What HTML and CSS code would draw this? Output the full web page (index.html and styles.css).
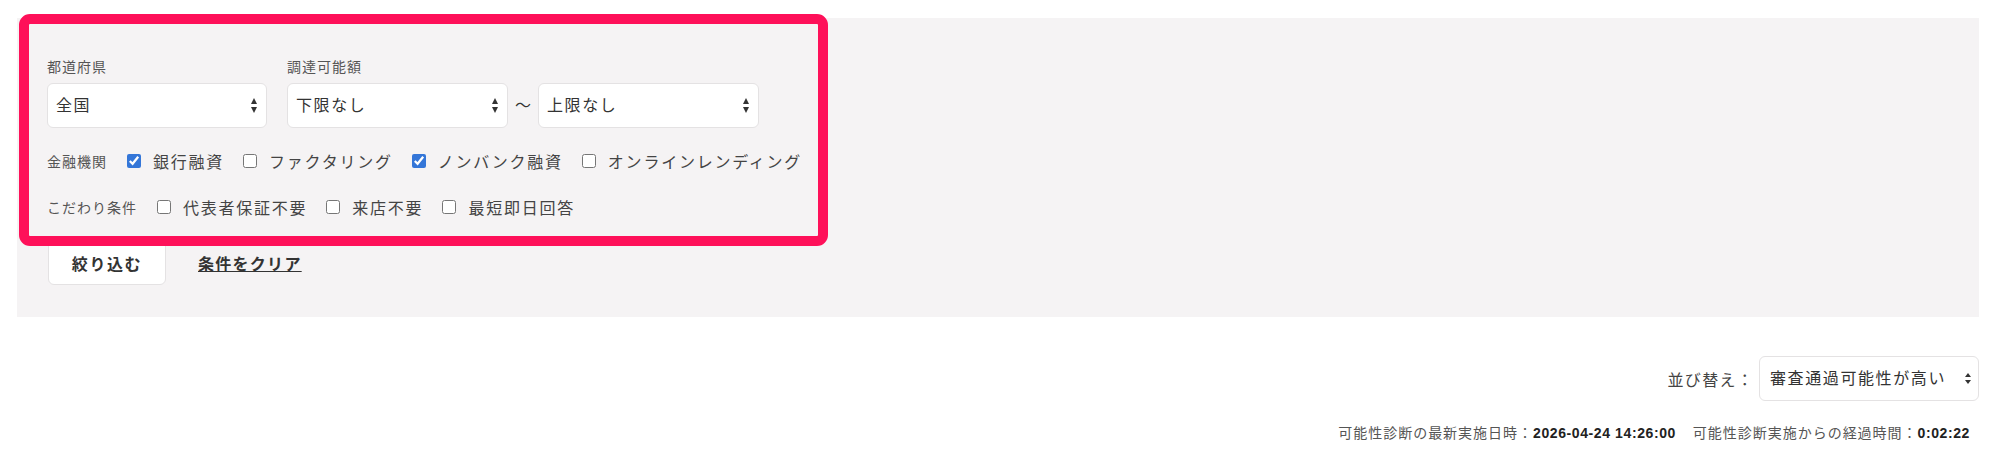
FILE: index.html
```html
<!DOCTYPE html>
<html lang="ja">

<head>
    <meta name="viewport" content="width=device-width, initial-scale=1">
    <meta charset="utf-8">
    <link rel="stylesheet" href="styles.css">
</head>

<body>

    <div class="page">
        <form class="search" action="#" method="get">
            <div class="search-row">
                <div class="field">
                    <label class="field-label" for="pref">都道府県</label>
                    <span class="select"><select id="pref" name="pref">
                        <option>全国</option>
                    </select></span>
                </div>
                <div class="field">
                    <label class="field-label" for="amount_min">調達可能額</label>
                    <div class="range">
                        <span class="select"><select id="amount_min" name="amount_min">
                            <option>下限なし</option>
                        </select></span>
                        <span class="range-sep">〜</span>
                        <span class="select"><select id="amount_max" name="amount_max">
                            <option>上限なし</option>
                        </select></span>
                    </div>
                </div>
            </div>

            <div class="check-row">
                <span class="check-title">金融機関</span>
                <label class="check"><input type="checkbox" name="type" value="bank" checked>銀行融資</label>
                <label class="check"><input type="checkbox" name="type" value="factoring">ファクタリング</label>
                <label class="check"><input type="checkbox" name="type" value="nonbank" checked>ノンバンク融資</label>
                <label class="check"><input type="checkbox" name="type" value="online">オンラインレンディング</label>
            </div>

            <div class="check-row">
                <span class="check-title">こだわり条件</span>
                <label class="check"><input type="checkbox" name="opt" value="no_guarantor">代表者保証不要</label>
                <label class="check"><input type="checkbox" name="opt" value="no_visit">来店不要</label>
                <label class="check"><input type="checkbox" name="opt" value="same_day">最短即日回答</label>
            </div>

            <div class="actions">
                <button type="submit" class="btn">絞り込む</button>
                <a href="#" class="clear">条件をクリア</a>
            </div>
        </form>

        <!-- marker frame around the filter fields -->
        <div class="highlight"></div>

        <div class="sort">
            <label for="sort">並び替え：</label>
            <span class="select select-sm"><select id="sort" name="sort">
                <option>審査通過可能性が高い</option>
            </select></span>
        </div>

        <p class="updated">
            <span>可能性診断の最新実施日時：<b>2026-04-24 14:26:00</b></span>
            <span class="elapsed">可能性診断実施からの経過時間：<b>0:02:22</b></span>
        </p>
    </div>

</body>

</html>
```

FILE: styles.css
```css
* {
    box-sizing: border-box;
}

body {
    margin: 0;
    font-family: "Liberation Sans", "Noto Sans CJK JP", sans-serif;
    color: #333;
    background: #fff;
}

.page {
    position: relative;
    padding: 18px 20px 0 17px;
}

/* search panel */

.search {
    background: #f5f3f4;
    padding: 39px 30px 32px 30px;
}

.search-row {
    display: flex;
    gap: 20px;
}

.field-label {
    display: block;
    font-size: 14px;
    line-height: 20px;
    letter-spacing: 1px;
    color: #555;
    margin-bottom: 6px;
}

.select {
    position: relative;
    display: inline-block;
}

.select select {
    -webkit-appearance: none;
    appearance: none;
    width: 220px;
    height: 45px;
    margin: 0;
    padding: 0 24px 0 8px;
    font: inherit;
    font-size: 16px;
    letter-spacing: .1em;
    color: #333;
    background: #fff;
    border: 1px solid #e4e2e3;
    border-radius: 6px;
}

/* up / down arrows */
.select::before,
.select::after {
    content: "";
    position: absolute;
    right: 10px;
    border-left: 3px solid transparent;
    border-right: 3px solid transparent;
    pointer-events: none;
}

.select::before {
    top: 15px;
    border-bottom: 6px solid #333;
}

.select::after {
    bottom: 15px;
    border-top: 6px solid #333;
}

.range {
    display: flex;
    align-items: center;
}

.range .select select {
    width: 221px;
}

.range-sep {
    margin: 0 7px;
    font-size: 16px;
    line-height: 1;
}

.check-row {
    display: flex;
    align-items: center;
    height: 24px;
    margin-top: 21px;
    font-size: 16px;
    letter-spacing: .11em;
}

.check-row + .check-row {
    margin-top: 22px;
}

.check-title {
    font-size: 14px;
    letter-spacing: 1px;
    color: #555;
    margin-right: 20px;
}

.check {
    display: flex;
    align-items: center;
    gap: 12px;
    margin-right: 19px;
    color: #444;
}

.check input {
    margin: 0;
    width: 14px;
    height: 14px;
    accent-color: #3476d8;
}

.actions {
    display: flex;
    align-items: center;
    gap: 32px;
    margin-top: 21px;
}

.btn {
    width: 118px;
    height: 45px;
    margin-left: 1px;
    font: inherit;
    font-size: 16px;
    font-weight: bold;
    letter-spacing: .1em;
    color: #333;
    background: #fff;
    border: 1px solid #e4e2e3;
    border-radius: 6px;
    cursor: pointer;
}

.clear {
    font-size: 16px;
    font-weight: bold;
    letter-spacing: .08em;
    color: #333;
    text-decoration: underline;
}

.highlight {
    position: absolute;
    left: 19px;
    top: 14px;
    width: 809px;
    height: 232px;
    border: 10px solid #fe1059;
    border-radius: 11px;
    pointer-events: none;
}

/* sort + status */

.sort {
    display: flex;
    justify-content: flex-end;
    align-items: center;
    gap: 5px;
    margin-top: 39px;
    font-size: 16px;
    letter-spacing: .08em;
    color: #444;
}

.select-sm select {
    padding-left: 10px;
}

.select-sm::before {
    right: 8px;
    top: 17px;
    border-bottom-width: 4px;
}

.select-sm::after {
    right: 8px;
    bottom: 17px;
    border-top-width: 4px;
}

.updated {
    margin: 22px 0 0;
    padding-right: 9px;
    text-align: right;
    font-size: 14px;
    line-height: 20px;
    letter-spacing: .07em;
    color: #555;
}

.updated b {
    color: #222;
    letter-spacing: .6px;
}

.elapsed {
    margin-left: 12px;
}
```
